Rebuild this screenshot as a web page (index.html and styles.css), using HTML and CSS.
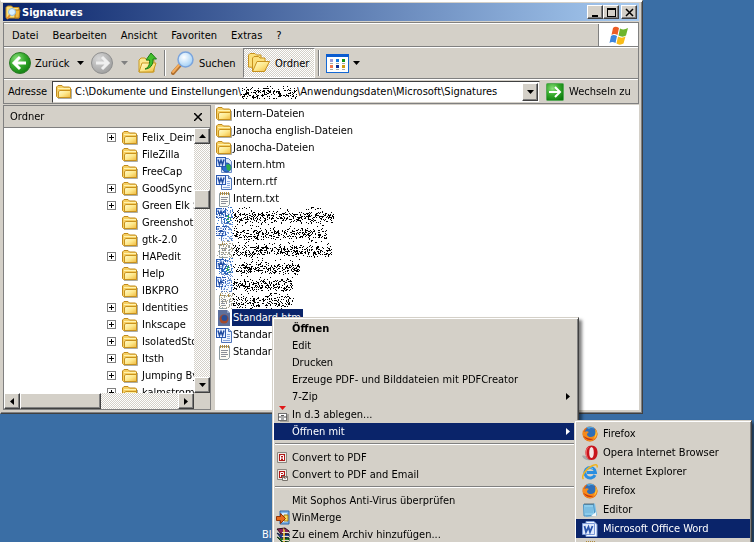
FILE: index.html
```
<!DOCTYPE html>
<html lang="de">
<head>
    <meta charset="UTF-8">
    <meta name="viewport" content="width=device-width, initial-scale=1.0">
    <title>Signatures</title>
    <link rel="stylesheet" href="styles.css">
</head>
<body>
    <!-- icon set -->
    <svg class="defs" aria-hidden="true">
        <defs>
            <linearGradient id="gold" x1="0" y1="0" x2="1" y2="1">
                <stop offset="0" stop-color="#fffbd0"/>
                <stop offset="0.5" stop-color="#fde88c"/>
                <stop offset="1" stop-color="#f0b83c"/>
            </linearGradient>
            <radialGradient id="green" cx="0.35" cy="0.3" r="0.8">
                <stop offset="0" stop-color="#8be07c"/>
                <stop offset="0.5" stop-color="#35a92c"/>
                <stop offset="1" stop-color="#0c7a0c"/>
            </radialGradient>
            <radialGradient id="grey" cx="0.35" cy="0.3" r="0.8">
                <stop offset="0" stop-color="#d8d8d8"/>
                <stop offset="1" stop-color="#9a9a9a"/>
            </radialGradient>
            <radialGradient id="lens" cx="0.4" cy="0.35" r="0.7">
                <stop offset="0" stop-color="#ffffff"/>
                <stop offset="1" stop-color="#9ccdf5"/>
            </radialGradient>
            <symbol id="folder" viewBox="0 0 16 16">
                <path d="M2 14.500h13.500V5" fill="none" stroke="#8a8a80" stroke-width="1" opacity="0.7"/>
                <path d="M0.500 12.500V3L2 1.500h4L7.500 3H13.500L14.500 4v9.500H1.500z" fill="#f6cf62" stroke="#c08a1c"/>
                <path d="M2 4.500h12" stroke="#fff3b0"/>
                <path d="M2.500 7.500L4 6.500h10.500v7H2.500z" fill="url(#gold)" stroke="#c8921e"/>
            </symbol>
            <symbol id="search-folder" viewBox="0 0 16 16">
                <path d="M1 13.500V3.500L2.500 2h4l1.500 1.500h6v10.500H1.500z" fill="#fbe07c" stroke="#c48a1a"/>
                <path d="M10 6h5l-1 8h-4z" fill="#f4b93c" stroke="#b87810"/>
                <circle cx="7" cy="8" r="3.500" fill="#d9f0ff" stroke="#8fbbe0"/>
                <path d="M5 11l-3 4" stroke="#e58b2a" stroke-width="2"/>
            </symbol>
            <symbol id="word" viewBox="0 0 16 16">
                <path d="M5.500 1.500h7l3 3v11h-10z" fill="#eef4ff" stroke="#4e74b8"/>
                <path d="M12.500 1.500v3h3" fill="#b8cdf0" stroke="#4e74b8"/>
                <path d="M11 7.500h3M11 9.500h3M7 13.500h7M11 11.500h3" stroke="#88a6dc"/>
                <rect x="0" y="1" width="10" height="10" fill="#2a58b0"/>
                <rect x="1" y="2" width="8" height="8" fill="#e8f0ff"/>
                <path d="M2 3.500l1.500 5L5 4.500l1.500 4L8 3.500" fill="none" stroke="#1f4aa0" stroke-width="1.500"/>
            </symbol>
            <symbol id="word-htm" viewBox="0 0 16 16">
                <path d="M5.500 1.500h7l3 3v11h-10z" fill="#dbe8fb" stroke="#6a8cc8"/>
                <circle cx="10.500" cy="10.500" r="4.500" fill="#2b6fd0" stroke="#1d4c9c"/>
                <path d="M10 8l3-1 2 3-1 4-3-1z" fill="#2fae4a"/>
                <rect x="0" y="0" width="10" height="10" fill="#2a58b0"/>
                <rect x="1" y="1" width="8" height="8" fill="#cfe0fb"/>
                <path d="M2 2.500l1.500 5L5 3.500l1.500 4L8 2.500" fill="none" stroke="#1f4aa0" stroke-width="1.500"/>
            </symbol>
            <symbol id="txt" viewBox="0 0 16 16">
                <path d="M3.500 2.500h10v11l-2 2h-8z" fill="#fbfbf4" stroke="#8c9aa0"/>
                <path d="M5 6.500h7M5 8.500h6M5 10.500h7M5 12.500h5" stroke="#8a8f98"/>
                <path d="M4.500 1v3M6.500 1v3M8.500 1v3M10.500 1v3M12.500 1v3" stroke="#b08a3a"/>
            </symbol>
            <symbol id="firefox" viewBox="0 0 16 16">
                <circle cx="8" cy="8" r="7.500" fill="#e56a12"/>
                <circle cx="8.500" cy="6.500" r="5.500" fill="#2f6fb8"/>
                <path d="M4 1.500C7 0 11 0 13 3c-2-1.500-5-1.500-6 0z" fill="#54a5dc"/>
                <path d="M1 4c0 2 1 2 2 2 1-1 2-1 4 0-1 1-2 1-2 3 1 2 4 3 7 1 2-2 2-4 1-7 2 2 3 5 2 7-2 5-8 7-12 3-2-2-3-6-2-9z" fill="#f58a1c"/>
                <path d="M13.500 3.500c2 3 1.500 7-1.500 9 1.500-3 2-6 1.500-9z" fill="#ffd23c"/>
                <path d="M1.500 10c2 4 7 5 10 3-4 0-7-1-10-3z" fill="#c8340c"/>
            </symbol>
            <symbol id="firefox-sel" viewBox="0 0 16 16">
                <path d="M2 0h9l3 3v13H2z" fill="#5c6f9c"/>
                <path d="M11 0v3h3" fill="#8fa0c4"/>
                <circle cx="8" cy="9" r="4.500" fill="#a34a2c"/>
                <circle cx="8.500" cy="8" r="3" fill="#2a4f98"/>
            </symbol>
            <symbol id="opera" viewBox="0 0 16 16">
                <path d="M0 11c2-1 5 0 6 2l3 2c-3 1-7 0-9-4z" fill="#a8a8a8"/>
                <path d="M9.500 0.500c4 0 6 3 6 7s-2 7.500-6 7.500-6-3.500-6-7.500 2-7 6-7z" fill="#c8141c"/>
                <path d="M8 1.500C5 3 4.500 6 5 10c0.500 2 1 3 2 4C4 13 3.500 10 3.500 7.500 3.500 4 5 2 8 1.500z" fill="#ef6a6a"/>
                <ellipse cx="9.500" cy="7.500" rx="2.300" ry="5.500" fill="#f4e6e6"/>
            </symbol>
            <symbol id="ie" viewBox="0 0 16 16">
                <path d="M13 11A5.300 5.300 0 1 1 13.500 8.500H5" fill="none" stroke="#2a8ee0" stroke-width="3"/>
                <path d="M4 6a4.500 4.500 0 0 1 7-1" fill="none" stroke="#7cc8f8" stroke-width="1"/>
                <path d="M1.500 15C-1 13 3 6 8 3s8-3 7 0.500" fill="none" stroke="#f0b420" stroke-width="1.500"/>
            </symbol>
            <symbol id="editor" viewBox="0 0 16 16">
                <path d="M3 2.500l10-1 2 12-11 1.500z" fill="#7cc0e8"/>
                <path d="M1.500 2.500h10l1.500 11-11 0.500z" fill="#8cccec" stroke="#4c94c4"/>
                <path d="M3 6h8M3 8h8M3 10h8" stroke="#6cb0d8"/>
                <path d="M3 1v2M5 1v2M7 1v2M9 1v2M11 1v2" stroke="#5d7480"/>
                <path d="M9 14l5-4v4z" fill="#f4f8fa"/>
            </symbol>
            <symbol id="word-app" viewBox="0 0 16 16">
                <path d="M4 0.500h8l3 3v12H4z" fill="#f3f7ff" stroke="#7f9cd4"/>
                <path d="M0.500 2.500h12v11H0.500z" fill="#dfe9fb" stroke="#7c9ad8"/>
                <path d="M2.500 5l1.500 6 2.500-5 1.500 5 2.500-6" fill="none" stroke="#2a55ac" stroke-width="1.800"/>
            </symbol>
            <symbol id="d3" viewBox="0 0 16 16">
                <path d="M3 0h7L6.500 4z" fill="#e01818"/>
                <rect x="4" y="8" width="9" height="8" fill="#a8a49c"/>
                <rect x="2.500" y="7.500" width="8" height="7" fill="#fff" stroke="#707070"/>
                <path d="M2 11h9M5 9.500h3M5 13h3" stroke="#555"/>
            </symbol>
            <symbol id="pdf" viewBox="0 0 16 16">
                <path d="M1.500 2.500h9v10h-9z" fill="#eeeae4" stroke="#8a8680"/>
                <path d="M3 4h6v7H3z" fill="#b01818"/>
                <path d="M4.500 10V5.500h3V10M4.500 8h3" fill="none" stroke="#fff"/>
            </symbol>
            <symbol id="pdf-mail" viewBox="0 0 16 16">
                <path d="M1.500 2.500h9v10h-9z" fill="#eeeae4" stroke="#8a8680"/>
                <path d="M3 4h6v7H3z" fill="#b01818"/>
                <path d="M4.500 10V5.500h3v2h-3" fill="none" stroke="#fff"/>
                <path d="M6.500 9.500h5v4h-5zl2.500 2 2.500-2" fill="#f4f4f4" stroke="#77736c"/>
            </symbol>
            <symbol id="winmerge" viewBox="0 0 16 16">
                <path d="M4 1h9v13H4z" fill="#7fb4e8" stroke="#2f66a8"/>
                <path d="M6 3h5v9H6z" fill="#d8ecfc"/>
                <path d="M8 5h4v6H8z" fill="#f8dc58" stroke="#a87c18"/>
                <path d="M0.500 6.500h4v-3l5 5-5 5v-3h-4z" fill="#e86a1c" stroke="#903408"/>
            </symbol>
            <symbol id="winrar" viewBox="0 0 16 16">
                <path d="M1 2l8-1 4 3v2L5 7z" fill="#8a2258" stroke="#30101c"/>
                <path d="M1 6l4 2 8-1v3L5 11z" fill="#2c4cb0" stroke="#10183c"/>
                <path d="M1 10l4 2 8-1v3l-7 1z" fill="#2c8c34" stroke="#0c3410"/>
                <path d="M7 1l2 2v12h-2V4z" fill="#d8b040"/>
                <path d="M6 9.500h7M6 13.500h7M6 5.500h7" stroke="#e8e0d0"/>
            </symbol>
            <symbol id="back" viewBox="0 0 22 22">
                <circle cx="11" cy="11" r="10.500" fill="url(#green)" stroke="#2d7a28"/>
                <path d="M11 5l-6 6 6 6M5.500 11H17" fill="none" stroke="#fff" stroke-width="3"/>
            </symbol>
            <symbol id="forward" viewBox="0 0 22 22">
                <circle cx="11" cy="11" r="10.500" fill="url(#grey)" stroke="#909090"/>
                <path d="M11 5l6 6-6 6M16.500 11H5" fill="none" stroke="#f0f0f0" stroke-width="3"/>
            </symbol>
            <symbol id="up" viewBox="0 0 20 22">
                <path d="M1 20V8l2-2h4l2 2h7v12z" fill="#fbe890" stroke="#c89820"/>
                <path d="M1 20l3-9h14l-3 9z" fill="url(#gold)" stroke="#c89820"/>
                <path d="M7 17c3-1 5-4 4.500-9H8l5-7 5.500 6H15c0.500 6-3 10-8 10z" fill="#43c02c" stroke="#1c7a18"/>
            </symbol>
            <symbol id="search" viewBox="0 0 24 24">
                <path d="M9 14l-7 8" stroke="#b07030" stroke-width="4" stroke-linecap="round"/>
                <path d="M9 13l-7 8" stroke="#f4ac5c" stroke-width="2" stroke-linecap="round"/>
                <circle cx="14.500" cy="8.500" r="7.500" fill="url(#lens)" stroke="#7ba4dc" stroke-width="1.500"/>
            </symbol>
            <symbol id="folders" viewBox="0 0 24 22">
                <path d="M1.500 15V3L3 1.500h5L9.500 3H14v13z" fill="#fbe07c" stroke="#c8921e"/>
                <path d="M5.500 19V6L7 4.500h4.500L13 6h5v13z" fill="#fbe07c" stroke="#c8921e"/>
                <path d="M5.500 19.500L10 9.500h12.500l-5 10z" fill="url(#gold)" stroke="#c8921e"/>
            </symbol>
            <symbol id="views" viewBox="0 0 23 19">
                <rect x="0.500" y="0.500" width="22" height="18" fill="#fff" stroke="#1468d4"/>
                <path d="M0 0h23v3H0z" fill="#0a5cd0"/>
                <path d="M4 5h3v3H4z" fill="#9c9cd8"/><path d="M10 5h3v3h-3z" fill="#1478e0"/><path d="M16 5h3v3h-3z" fill="#109418"/>
                <path d="M4 11h3v3H4z" fill="#f4744c"/><path d="M10 11h3v3h-3z" fill="#0c2c94"/><path d="M16 11h3v3h-3z" fill="#d09c10"/>
                <path d="M4 9.500h3M10 9.500h3M16 9.500h3M4 15.500h3M10 15.500h3M16 15.500h3" stroke="#a8a8a8"/>
            </symbol>
            <symbol id="go" viewBox="0 0 18 18">
                <rect x="0.500" y="0.500" width="17" height="17" rx="1" fill="url(#green)" stroke="#58a858"/>
                <path d="M9 4l5 5-5 5M13 9H3" fill="none" stroke="#fff" stroke-width="2"/>
            </symbol>
            <symbol id="flag" viewBox="0 0 20 19">
                <path d="M4 2c2-2 4-1 6 0L8.500 9c-2-1-4-1.500-6 0z" fill="#ec5c24"/>
                <path d="M11 2.500c3 1.500 5 1 8-0.500l-2 7.500c-2 1.500-5 1.500-7.500 0z" fill="#6cb42c"/>
                <path d="M2 10c2-1.500 4-1 6 0l-1.500 7c-2-1-4-1.500-6 0z" fill="#3c84dc"/>
                <path d="M9 10.500c2.500 1.500 5 1.500 7.500 0l-2 7c-2.500 1.500-5 1.500-7 0z" fill="#f8bc18"/>
            </symbol>
            <symbol id="tri-down" viewBox="0 0 7 4"><path d="M0 0h7L3.500 4z"/></symbol>
            <symbol id="tri-up" viewBox="0 0 7 4"><path d="M0 4h7L3.500 0z"/></symbol>
            <symbol id="tri-left" viewBox="0 0 4 7"><path d="M4 0v7L0 3.500z"/></symbol>
            <symbol id="tri-right" viewBox="0 0 4 7"><path d="M0 0v7l4-3.500z"/></symbol>
        </defs>
    </svg>

    <div class="window">
        <header class="titlebar">
            <svg class="icon"><use href="#search-folder"/></svg>
            <h1>Signatures</h1>
            <button class="bevel caption" aria-label="Minimieren"><svg viewBox="0 0 9 9"><path d="M1 7h6v2H1z"/></svg></button>
            <button class="bevel caption" aria-label="Maximieren"><svg viewBox="0 0 9 9"><path d="M0 0h9v9H0zM1 2v6h7V2z" fill-rule="evenodd"/></svg></button>
            <button class="bevel caption close" aria-label="Schließen"><svg viewBox="0 0 9 9"><path d="M1 1l7 7M8 1l-7 7" stroke="#000" stroke-width="1.500"/></svg></button>
        </header>

        <div class="bars">
            <nav class="bar menubar">
                <button>Datei</button>
                <button>Bearbeiten</button>
                <button>Ansicht</button>
                <button>Favoriten</button>
                <button>Extras</button>
                <button>?</button>
                <span class="throbber"><svg><use href="#flag"/></svg></span>
            </nav>

            <div class="bar toolbar">
                <button class="tool back"><svg class="big"><use href="#back"/></svg><span>Zurück</span><svg class="drop"><use href="#tri-down"/></svg></button>
                <button class="tool forward" aria-label="Vorwärts"><svg class="big"><use href="#forward"/></svg><svg class="drop off"><use href="#tri-down"/></svg></button>
                <button class="tool up" aria-label="Aufwärts"><svg class="big"><use href="#up"/></svg></button>
                <span class="divider"></span>
                <button class="tool find"><svg class="wide"><use href="#search"/></svg><span>Suchen</span></button>
                <button class="tool pressed"><svg class="wide"><use href="#folders"/></svg><span>Ordner</span></button>
                <span class="divider"></span>
                <button class="tool views" aria-label="Ansichten"><svg class="list"><use href="#views"/></svg><svg class="drop"><use href="#tri-down"/></svg></button>
            </div>

            <div class="bar address">
                <label for="path">Adresse</label>
                <div class="combo">
                    <svg class="icon"><use href="#folder"/></svg>
                    <input id="path" class="path-start" type="text" value="C:\Dokumente und Einstellungen\">
                    <canvas class="scribble" width="56" height="14" data-seed="7"></canvas>
                    <input class="path-end" type="text" value="\Anwendungsdaten\Microsoft\Signatures" aria-label="Unterordner">
                    <button class="bevel" aria-label="Verlauf"><svg class="drop"><use href="#tri-down"/></svg></button>
                </div>
                <button class="tool go"><svg><use href="#go"/></svg><span>Wechseln zu</span></button>
            </div>
        </div>

        <main class="panes">
            <section class="tree-pane">
                <div class="pane-head">
                    <h2>Ordner</h2>
                    <button aria-label="Ordnerleiste schließen"><svg viewBox="0 0 8 8"><path d="M0 0l8 8M8 0L0 8" stroke="#000" stroke-width="1.500"/></svg></button>
                </div>
                <div class="tree-area">
                    <ul class="tree">
                        <li class="sub"><svg class="icon"><use href="#folder"/></svg>Felix_Deim</li>
                        <li><svg class="icon"><use href="#folder"/></svg>FileZilla</li>
                        <li><svg class="icon"><use href="#folder"/></svg>FreeCap</li>
                        <li class="sub"><svg class="icon"><use href="#folder"/></svg>GoodSync</li>
                        <li class="sub"><svg class="icon"><use href="#folder"/></svg>Green Elk S</li>
                        <li><svg class="icon"><use href="#folder"/></svg>Greenshot</li>
                        <li><svg class="icon"><use href="#folder"/></svg>gtk-2.0</li>
                        <li class="sub"><svg class="icon"><use href="#folder"/></svg>HAPedit</li>
                        <li><svg class="icon"><use href="#folder"/></svg>Help</li>
                        <li><svg class="icon"><use href="#folder"/></svg>IBKPRO</li>
                        <li class="sub"><svg class="icon"><use href="#folder"/></svg>Identities</li>
                        <li class="sub"><svg class="icon"><use href="#folder"/></svg>Inkscape</li>
                        <li class="sub"><svg class="icon"><use href="#folder"/></svg>IsolatedSto</li>
                        <li class="sub"><svg class="icon"><use href="#folder"/></svg>Itsth</li>
                        <li class="sub"><svg class="icon"><use href="#folder"/></svg>Jumping By</li>
                        <li class="sub"><svg class="icon"><use href="#folder"/></svg>kalmstrom</li>
                    </ul>
                    <div class="scroll vertical">
                        <button class="bevel" aria-label="Nach oben"><svg class="drop"><use href="#tri-up"/></svg></button>
                        <span class="bevel thumb"></span>
                        <button class="bevel" aria-label="Nach unten"><svg class="drop"><use href="#tri-down"/></svg></button>
                    </div>
                    <div class="scroll horizontal">
                        <button class="bevel" aria-label="Nach links"><svg class="side"><use href="#tri-left"/></svg></button>
                        <span class="bevel thumb"></span>
                        <button class="bevel" aria-label="Nach rechts"><svg class="side"><use href="#tri-right"/></svg></button>
                    </div>
                    <span class="corner"></span>
                </div>
            </section>

            <ul class="files">
                <li><svg class="icon"><use href="#folder"/></svg><span>Intern-Dateien</span></li>
                <li><svg class="icon"><use href="#folder"/></svg><span>Janocha english-Dateien</span></li>
                <li><svg class="icon"><use href="#folder"/></svg><span>Janocha-Dateien</span></li>
                <li><svg class="icon"><use href="#word-htm"/></svg><span>Intern.htm</span></li>
                <li><svg class="icon"><use href="#word"/></svg><span>Intern.rtf</span></li>
                <li><svg class="icon"><use href="#txt"/></svg><span>Intern.txt</span></li>
                <li><svg class="icon"><use href="#word-htm"/></svg><canvas class="scribble" width="118" height="17" data-seed="11" data-tint="#3c78c8"></canvas></li>
                <li><svg class="icon"><use href="#word"/></svg><canvas class="scribble" width="111" height="17" data-seed="23" data-tint="#6a94d8"></canvas></li>
                <li><svg class="icon"><use href="#txt"/></svg><canvas class="scribble" width="116" height="17" data-seed="31" data-tint="#a8a490"></canvas></li>
                <li><svg class="icon"><use href="#word-htm"/></svg><canvas class="scribble" width="84" height="17" data-seed="47" data-tint="#3c78c8"></canvas></li>
                <li><svg class="icon"><use href="#word"/></svg><canvas class="scribble" width="77" height="17" data-seed="59" data-tint="#6a94d8"></canvas></li>
                <li><svg class="icon"><use href="#txt"/></svg><canvas class="scribble" width="78" height="17" data-seed="61" data-tint="#a8a490"></canvas></li>
                <li class="selected"><svg class="icon"><use href="#firefox-sel"/></svg><span>Standard.htm</span></li>
                <li><svg class="icon"><use href="#word"/></svg><span>Standard.rtf</span></li>
                <li><svg class="icon"><use href="#txt"/></svg><span>Standard.txt</span></li>
            </ul>
        </main>
    </div>

    <span class="desktop-label">Bl</span>

    <div class="menu context" role="menu">
        <button role="menuitem" class="default"><span>Öffnen</span></button>
        <button role="menuitem"><span>Edit</span></button>
        <button role="menuitem"><span>Drucken</span></button>
        <button role="menuitem"><span>Erzeuge PDF- und Bilddateien mit PDFCreator</span></button>
        <button role="menuitem"><span>7-Zip</span><svg class="side"><use href="#tri-right"/></svg></button>
        <button role="menuitem" class="tall"><svg class="icon"><use href="#d3"/></svg><span>In d.3 ablegen...</span></button>
        <button role="menuitem" class="active"><span>Öffnen mit</span><svg class="side"><use href="#tri-right"/></svg></button>
        <hr>
        <button role="menuitem"><svg class="icon"><use href="#pdf"/></svg><span>Convert to PDF</span></button>
        <button role="menuitem"><svg class="icon"><use href="#pdf-mail"/></svg><span>Convert to PDF and Email</span></button>
        <hr>
        <button role="menuitem"><span>Mit Sophos Anti-Virus überprüfen</span></button>
        <button role="menuitem"><svg class="icon"><use href="#winmerge"/></svg><span>WinMerge</span></button>
        <button role="menuitem"><svg class="icon"><use href="#winrar"/></svg><span>Zu einem Archiv hinzufügen...</span></button>
    </div>

    <div class="menu open-with" role="menu">
        <button role="menuitem"><svg class="icon"><use href="#firefox"/></svg><span>Firefox</span></button>
        <button role="menuitem"><svg class="icon"><use href="#opera"/></svg><span>Opera Internet Browser</span></button>
        <button role="menuitem"><svg class="icon"><use href="#ie"/></svg><span>Internet Explorer</span></button>
        <button role="menuitem"><svg class="icon"><use href="#firefox"/></svg><span>Firefox</span></button>
        <button role="menuitem"><svg class="icon"><use href="#editor"/></svg><span>Editor</span></button>
        <button role="menuitem" class="active"><svg class="icon"><use href="#word-app"/></svg><span>Microsoft Office Word</span></button>
        <button role="menuitem" aria-label="WordPad"><svg class="icon"><use href="#txt"/></svg></button>
    </div>

    <script src="scribble.js"></script>
</body>
</html>
```
FILE: styles.css
```
*, *::before {
    box-sizing: border-box;
}
body {
    margin: 0;
    height: 100vh;
    overflow: hidden;
    position: relative;
    background: #3a6ea5;
    color: #000;
    font-family: Tahoma, "DejaVu Sans Condensed", "Liberation Sans", sans-serif;
    font-size: 11px;
    line-height: 17px;
}
button, input {
    font: inherit;
    color: inherit;
    margin: 0;
    padding: 0;
    border: 0;
    background: none;
    white-space: nowrap;
}
h1, h2 {
    margin: 0;
    font-size: 11px;
}
ul {
    list-style: none;
    margin: 0;
    padding: 0;
}
svg {
    display: block;
    flex: none;
}
.defs {
    position: absolute;
    width: 0;
    height: 0;
}
.icon {
    width: 16px;
    height: 16px;
}
.drop {
    width: 7px;
    height: 4px;
}
.side {
    width: 4px;
    height: 7px;
}
.off {
    fill: #808080;
}
.bevel {
    display: flex;
    align-items: center;
    justify-content: center;
    background: #d4d0c8;
    border: 1px solid;
    border-color: #fff #404040 #404040 #fff;
    box-shadow: inset -1px -1px #808080;
}

/* window frame */
.window {
    margin-right: 111px;
    padding: 2px 3px 3px 2px;
    background: #d4d0c8;
    border: 1px solid;
    border-color: #fff #404040 #404040 #d4d0c8;
    box-shadow: inset 0 1px #fff, inset -1px -1px #808080;
}
.titlebar {
    display: flex;
    align-items: center;
    height: 18px;
    padding: 0 2px;
    background: linear-gradient(to right, #0a246a, #a6caf0);
    color: #fff;
}
.titlebar h1 {
    flex: 1;
    padding-left: 1px;
}
.caption {
    width: 16px;
    height: 14px;
}
.caption svg {
    width: 9px;
    height: 9px;
}
.close {
    margin-left: 2px;
}

/* menu, toolbar, address */
.bars {
    margin-top: 1px;
    border: 1px solid #808080;
}
.bar {
    display: flex;
    align-items: center;
    border-top: 1px solid #fff;
    border-bottom: 1px solid #808080;
}
.bar:last-child {
    border-bottom: 0;
}
.menubar {
    height: 24px;
    padding-left: 1px;
}
.menubar button {
    padding: 0 7px;
}
.throbber {
    align-self: stretch;
    display: flex;
    align-items: center;
    justify-content: center;
    width: 40px;
    margin-left: auto;
    background: #fff;
    border-left: 1px solid #808080;
}
.throbber svg {
    width: 20px;
    height: 19px;
}
.toolbar {
    height: 32px;
    padding-left: 5px;
}
.tool {
    display: flex;
    align-items: center;
    gap: 4px;
}
.big {
    width: 22px;
    height: 22px;
}
.wide {
    width: 24px;
    height: 24px;
}
.list {
    width: 23px;
    height: 19px;
}
.back {
    width: 82px;
}
.back span {
    width: 38px;
    text-align: left;
}
.forward {
    width: 46px;
    gap: 8px;
}
.divider {
    width: 2px;
    height: 26px;
    margin: 0 5px;
    background: linear-gradient(to right, #808080 50%, #fff 50%);
}
.find {
    width: 72px;
}
.pressed {
    width: 72px;
    height: 30px;
    padding-left: 3px;
    border: 1px solid;
    border-color: #808080 #fff #fff #808080;
    background: repeating-conic-gradient(#fff 0 25%, #d4d0c8 0 50%) 0 0 / 2px 2px;
}
.pressed + .divider {
    margin: 0 6px 0 3px;
}
.address {
    height: 24px;
    padding: 0 8px 0 4px;
}
.address label {
    width: 44px;
}
.combo {
    flex: 1;
    display: flex;
    align-items: center;
    height: 22px;
    padding: 1px;
    background: #fff;
    border: 1px solid;
    border-color: #404040 #d4d0c8 #d4d0c8 #404040;
}
.combo .icon {
    margin: 0 3px 0 2px;
}
.combo .bevel {
    width: 16px;
    height: 18px;
}
.path-start {
    width: 166px;
}
.path-end {
    flex: 1;
    min-width: 0;
}
.go {
    margin-left: 6px;
    gap: 5px;
}
.go svg {
    width: 18px;
    height: 18px;
}
.go span {
    width: 61px;
    text-align: left;
}

/* panes */
.panes {
    display: flex;
    gap: 4px;
    margin-top: 1px;
}
.tree-pane {
    width: 208px;
    border: 1px solid #808080;
}
.pane-head {
    display: flex;
    align-items: center;
    justify-content: space-between;
    height: 22px;
    padding: 0 8px 0 6px;
    border-bottom: 1px solid #808080;
}
.pane-head h2 {
    font-weight: normal;
}
.pane-head svg {
    width: 8px;
    height: 8px;
}
.tree-area {
    display: grid;
    grid-template-columns: 1fr 16px;
    grid-template-rows: 265px 16px;
}
.tree {
    overflow: hidden;
    padding-top: 1px;
    background: #fff;
}
.tree li {
    display: flex;
    align-items: center;
    gap: 4px;
    height: 17px;
    padding-left: 118px;
    white-space: nowrap;
}
.tree .sub {
    padding-left: 103px;
}
.sub::before {
    content: "";
    flex: none;
    width: 9px;
    height: 9px;
    margin-right: 2px;
    border: 1px solid #808080;
    background:
        linear-gradient(#000, #000) center / 5px 1px no-repeat,
        linear-gradient(#000, #000) center / 1px 5px no-repeat;
}
.scroll {
    display: flex;
    background: repeating-conic-gradient(#fff 0 25%, #d4d0c8 0 50%) 0 0 / 2px 2px;
}
.scroll button {
    width: 16px;
    height: 16px;
}
.vertical {
    flex-direction: column;
}
.vertical .thumb {
    height: 19px;
    margin: 46px 0 auto;
}
.horizontal .thumb {
    width: 81px;
    margin-right: auto;
}
.files {
    flex: 1;
    padding-left: 1px;
    background: #fff;
}
.files li {
    display: flex;
    align-items: center;
    position: relative;
    height: 17px;
}
.files span {
    padding: 0 2px 0 1px;
}
.files .selected span {
    background: #0a246a;
    color: #fff;
}
.files .scribble {
    position: absolute;
    left: 0;
    top: 0;
}

/* menus */
.desktop-label {
    position: absolute;
    left: 262px;
    top: 526px;
    color: #fff;
}
.menu {
    position: absolute;
    padding: 1px;
    background: #d4d0c8;
    border: 1px solid;
    border-color: #d4d0c8 #404040 #404040 #d4d0c8;
    box-shadow: inset 1px 1px #fff, inset -1px -1px #808080, 3px 3px 3px rgba(0, 0, 0, 0.5);
}
.menu button {
    display: flex;
    align-items: center;
    width: 100%;
    height: 17px;
    padding: 0 7px 0 2px;
}
.menu span:first-child {
    margin-left: 16px;
}
.menu .side {
    margin-left: auto;
}
.menu .default {
    font-weight: bold;
}
.menu .tall {
    height: 18px;
}
.menu .active {
    background: #0a246a;
    color: #fff;
    fill: #fff;
}
.menu hr {
    height: 2px;
    margin: 3px 1px 4px;
    border: 0;
    border-top: 1px solid #808080;
    border-bottom: 1px solid #fff;
}
.context {
    left: 272px;
    top: 317px;
    width: 307px;
    padding-top: 2px;
}
.open-with {
    left: 574px;
    top: 420px;
    width: 178px;
    padding-top: 3px;
}
.open-with button {
    height: 19px;
    padding-left: 6px;
}
.open-with span {
    padding-left: 5px;
}
```
FILE: scribble.js
```
// sprays pixels over names that should stay unreadable
document.querySelectorAll('.scribble').forEach(function (canvas) {
    const ctx = canvas.getContext('2d');
    const tint = canvas.dataset.tint;
    const textStart = tint ? 17 : 0;
    const middle = canvas.height / 2 + 1;
    let seed = Number(canvas.dataset.seed);

    function random() {
        seed = (seed * 16807) % 2147483647;
        return seed / 2147483647;
    }
    for (let i = 0; i < 20; i++) random();

    for (let y = 0; y < canvas.height; y++) {
        for (let x = 0; x < canvas.width; x++) {
            if (x < textStart) {
                // icon area, gets sparser to the right
                if (random() < 0.6 * x / 16 + 0.1) {
                    ctx.fillStyle = random() < 0.6 ? '#fff' : tint;
                    ctx.fillRect(x, y, 1, 1);
                }
                continue;
            }
            const distance = Math.abs(y - middle);
            const density = distance < 4 ? 0.33 : distance < 6 ? 0.15 : 0.04;
            if (random() < density) {
                ctx.fillStyle = '#000';
                ctx.fillRect(x, y, 1, 1);
            }
        }
    }
});
```
